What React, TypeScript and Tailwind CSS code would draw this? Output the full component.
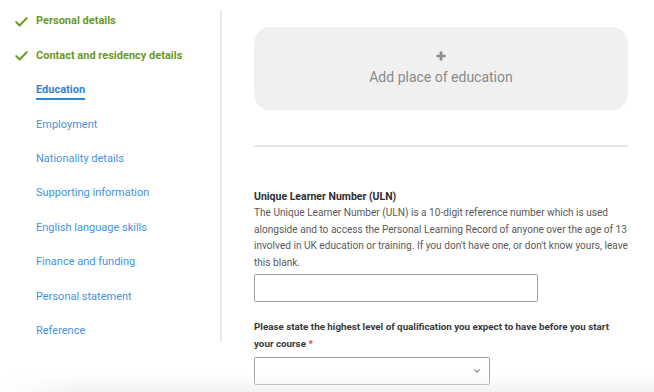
import React from 'react';
import { ChevronDown } from 'lucide-react';

const steps = [
  { label: 'Personal details', state: 'done' },
  { label: 'Contact and residency details', state: 'done' },
  { label: 'Education', state: 'current' },
  { label: 'Employment', state: 'todo' },
  { label: 'Nationality details', state: 'todo' },
  { label: 'Supporting information', state: 'todo' },
  { label: 'English language skills', state: 'todo' },
  { label: 'Finance and funding', state: 'todo' },
  { label: 'Personal statement', state: 'todo' },
  { label: 'Reference', state: 'todo' },
];

const Tick = () => (
  <svg width="13" height="11" viewBox="0 0 13 11" className="absolute left-[15px] top-1/2 -translate-y-1/2">
    <path d="M1.2 5.6 L4.6 9 L11.8 1.6" fill="none" stroke="#6a9a1e" strokeWidth="2" strokeLinecap="round" strokeLinejoin="round" />
  </svg>
);

export default function App() {
  return (
    <div className="relative w-[654px] h-[392px] overflow-hidden bg-white flex font-['Roboto',sans-serif]">
      {/* sidebar */}
      <nav className="w-[220px] shrink-0 pt-[4.5px] flex flex-col">
        {steps.map((s) => (
          <div key={s.label} className="relative h-[34.4px] flex items-center pl-[36px]">
            {s.state === 'done' && <Tick />}
            {s.state === 'done' ? (
              <span className="text-[11px] font-bold text-[#6a9a1e]">{s.label}</span>
            ) : s.state === 'current' ? (
              <span className="text-[11px] font-bold text-[#2f84d8] border-b-2 border-[#2f84d8] leading-[14px] pb-[1px] mt-[2px]">
                {s.label}
              </span>
            ) : (
              <span className="text-[11px] text-[#4592e0]">{s.label}</span>
            )}
          </div>
        ))}
      </nav>
      <div className="w-[2px] shrink-0 bg-[#ececec] mt-[10px] h-[332px]" />

      {/* main */}
      <main className="flex-1 pl-[32px] pr-[26px] pt-[27px]">
        <div className="h-[83px] rounded-[16px] bg-[#f0f0f0] flex flex-col items-center justify-center">
          <svg width="10" height="10" viewBox="0 0 10 10">
            <path d="M5 0.5 V9.5 M0.5 5 H9.5" stroke="#8c8c8c" strokeWidth="2.6" />
          </svg>
          <span className="mt-[7px] text-[14px] text-[#8a8a8a] leading-[18px]">Add place of education</span>
        </div>

        <div className="mt-[35px] h-[1.5px] bg-[#e6e6e6]" />

        <h3 className="mt-[42px] text-[10.5px] font-bold text-[#2e2e2e] leading-[16.5px]">
          Unique Learner Number (ULN)
        </h3>
        <p className="text-[10.1px] text-[#5a5a5a] leading-[16.6px]">
          The Unique Learner Number (ULN) is a 10-digit reference number which is used alongside and to access the
          Personal Learning Record of anyone over the age of 13 involved in UK education or training. If you don't
          have one, or don't know yours, leave this blank.
        </p>
        <input
          type="text"
          className="block mt-[3px] w-[284px] h-[28px] border border-[#a0a0a0] rounded-[2px] bg-white"
        />

        <p className="mt-[16px] text-[9.8px] font-bold text-[#3a3a3a] leading-[17px]">
          Please state the highest level of qualification you expect to have before you start your course{' '}
          <span className="text-[#e23b2e]">*</span>
        </p>
        <div className="mt-[5px] w-[236px] h-[28px] border border-[#a0a0a0] rounded-[2px] bg-white flex items-center justify-end pr-[7px]">
          <ChevronDown size={10} strokeWidth={2.5} className="text-[#666]" />
        </div>
      </main>

      {/* bottom fade shadow */}
      <div className="pointer-events-none absolute left-0 right-0 bottom-0 h-[18px] bg-gradient-to-b from-transparent to-[#ececec]/70 [mask-image:linear-gradient(to_right,transparent_0,black_80px)]" />
    </div>
  );
}
